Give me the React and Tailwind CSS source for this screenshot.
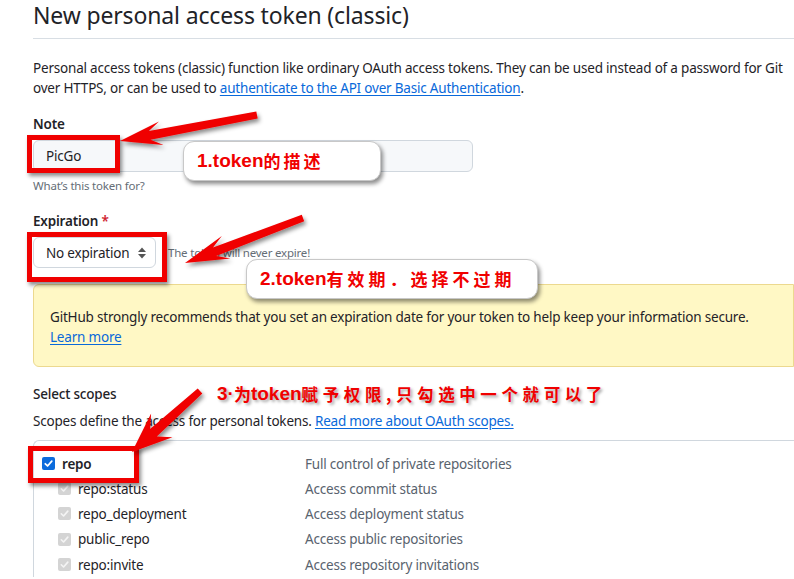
import React from "react";

function arrowPts(x1, y1, x2, y2, tw, sw, hl, hw) {
  const dx = x2 - x1, dy = y2 - y1;
  const L = Math.hypot(dx, dy);
  const ux = dx / L, uy = dy / L;
  const nx = -uy, ny = ux;
  const jx = x2 - ux * hl * 0.72, jy = y2 - uy * hl * 0.72;
  const wx = x2 - ux * hl, wy = y2 - uy * hl;
  const p = [
    [x1 + nx * tw, y1 + ny * tw],
    [jx + nx * sw, jy + ny * sw],
    [wx + nx * hw, wy + ny * hw],
    [x2, y2],
    [wx - nx * hw, wy - ny * hw],
    [jx - nx * sw, jy - ny * sw],
    [x1 - nx * tw, y1 - ny * tw],
  ];
  return p.map((q) => q[0].toFixed(1) + "," + q[1].toFixed(1)).join(" ");
}

function CheckOn() {
  return (
    <span className="inline-flex w-[13px] h-[13px] rounded-[2px] bg-[#0b6bdc] items-center justify-center shrink-0">
      <svg width="11" height="11" viewBox="0 0 12 12">
        <path d="M2.5 6.3 L5 8.7 L9.6 3.4" fill="none" stroke="#fff" strokeWidth="1.9" strokeLinecap="round" strokeLinejoin="round" />
      </svg>
    </span>
  );
}

function CheckOff() {
  return (
    <span className="inline-flex w-[13px] h-[13px] rounded-[2px] bg-[#d4d4d4] items-center justify-center shrink-0">
      <svg width="11" height="11" viewBox="0 0 12 12">
        <path d="M2.5 6.3 L5 8.7 L9.6 3.4" fill="none" stroke="#f4f4f4" strokeWidth="1.8" strokeLinecap="round" strokeLinejoin="round" />
      </svg>
    </span>
  );
}

const subs = [
  ["repo:status", "Access commit status"],
  ["repo_deployment", "Access deployment status"],
  ["public_repo", "Access public repositories"],
  ["repo:invite", "Access repository invitations"],
];

export default function App() {
  return (
    <div className="relative w-[794px] h-[579px] overflow-hidden bg-white text-[#1f2328] font-['Noto_Sans','Noto_Sans_CJK_SC',sans-serif] text-[13.5px] tracking-[-0.2px] leading-[20px]">
      <div className="pl-[33px]">
        <h1 className="text-[23px] tracking-[-0.15px] leading-[30px] font-normal pb-[8px] border-b border-[#d8dee4] whitespace-nowrap">
          New personal access token (classic)
        </h1>
        <div className="mt-[19px] whitespace-nowrap">
          <div>Personal access tokens (classic) function like ordinary OAuth access tokens. They can be used instead of a password for Git</div>
          <div>
            over HTTPS, or can be used to{" "}
            <span className="text-[#0969da] underline underline-offset-2">authenticate to the API over Basic Authentication</span>.
          </div>
        </div>

        <div className="mt-[16px] font-semibold">Note</div>
        <div className="mt-[6px] w-[440px] h-[32px] rounded-[6px] border border-[#d0d7de] bg-[#f6f8fa] flex items-center pl-[12px]">
          PicGo
        </div>
        <div className="mt-[5px] text-[11.5px] leading-[18px] text-[#656d76]">What’s this token for?</div>

        <div className="mt-[16px] font-semibold">
          Expiration <span className="text-[#cf222e]">*</span>
        </div>
        <div className="mt-[6px] flex items-center">
          <div className="w-[123px] h-[31px] rounded-[6px] border border-[#d0d7de] bg-white flex items-center pl-[12px] pr-[8px] justify-between">
            <span>No expiration</span>
            <svg width="10" height="14" viewBox="0 0 10 14">
              <path d="M5 1.5 L9 6 L1 6 Z" fill="#555" />
              <path d="M5 12.5 L9 8 L1 8 Z" fill="#555" />
            </svg>
          </div>
          <span className="ml-[12px] text-[11.5px] text-[#656d76]">The token will never expire!</span>
        </div>

        <div className="mt-[16px] border border-[#ecd98f] bg-[#fff8c5] rounded-l-[6px] pt-[22px] pb-[19px] pl-[16px] whitespace-nowrap">
          <div>GitHub strongly recommends that you set an expiration date for your token to help keep your information secure.</div>
          <div className="text-[#0969da] underline underline-offset-2 inline-block">Learn more</div>
        </div>

        <div className="mt-[17px] font-medium">Select scopes</div>
        <div className="mt-[7px] whitespace-nowrap">
          Scopes define the access for personal tokens.{" "}
          <span className="text-[#0969da] underline underline-offset-2">Read more about OAuth scopes.</span>
        </div>

        <div className="mt-[9px] border-t border-l border-[#d0d7de] rounded-tl-[6px] pt-[10px]">
          <div className="flex items-center h-[25px]">
            <div className="w-[271px] flex items-center pl-[8px] gap-[7px]">
              <CheckOn />
              <span className="font-semibold">repo</span>
            </div>
            <span className="text-[#59636e]">Full control of private repositories</span>
          </div>
          {subs.map(([n, d]) => (
            <div key={n} className="flex items-center h-[25.3px]">
              <div className="w-[271px] flex items-center pl-[24px] gap-[7px]">
                <CheckOff />
                <span>{n}</span>
              </div>
              <span className="text-[#59636e]">{d}</span>
            </div>
          ))}
        </div>
      </div>

      {/* Red highlight boxes */}
      <div className="absolute left-[27px] top-[135px] w-[93px] h-[38px] border-[5px] border-[#f00000] shadow-[2px_3px_4px_rgba(0,0,0,0.45)]" />
      <div className="absolute left-[27px] top-[232px] w-[140px] h-[50px] border-[5px] border-[#f00000] shadow-[2px_3px_4px_rgba(0,0,0,0.45)]" />
      <div className="absolute left-[28px] top-[446px] w-[111px] h-[37px] border-[5px] border-[#f00000] shadow-[2px_3px_4px_rgba(0,0,0,0.45)]" />

      {/* Callouts */}
      <div className="absolute left-[183px] top-[141px] w-[198px] h-[40px] rounded-[11px] border border-[#c8c8c8] bg-white shadow-[2px_3px_4px_rgba(0,0,0,0.45)] flex items-center pl-[13px] text-[#f00000] tracking-normal">
        <span className="font-['Liberation_Sans'] font-bold text-[19px]">1.token</span>
        <span className="font-['Noto_Sans_CJK_SC'] text-[17px] tracking-[3px] font-semibold">的描述</span>
      </div>
      <div className="absolute left-[246px] top-[259px] w-[292px] h-[40px] rounded-[11px] border border-[#c8c8c8] bg-white shadow-[2px_3px_4px_rgba(0,0,0,0.45)] flex items-center pl-[13px] text-[#f00000] tracking-normal">
        <span className="font-['Liberation_Sans'] font-bold text-[19px]">2.token</span>
        <span className="font-['Noto_Sans_CJK_SC'] text-[17px] tracking-[4px] font-semibold">有效期．选择不过期</span>
      </div>
      <div className="absolute left-[217px] top-[384px] text-[#f00000] whitespace-nowrap [text-shadow:2px_2px_3px_rgba(0,0,0,0.35)] flex items-center tracking-normal">
        <span className="font-['Liberation_Sans'] font-bold text-[19px]">3·</span>
        <span className="font-['Noto_Sans_CJK_SC'] font-bold text-[17px]">为</span>
        <span className="font-['Liberation_Sans'] font-bold text-[19px]">token</span>
        <span className="font-['Noto_Sans_CJK_SC'] text-[16.5px] tracking-[4.6px] font-semibold">赋予权限,只勾选中一个就可以了</span>
      </div>

      {/* Arrows */}
      <svg className="absolute left-0 top-0 pointer-events-none" width="794" height="579">
        <defs>
          <filter id="sh" x="-20%" y="-20%" width="140%" height="140%">
            <feDropShadow dx="2" dy="3" stdDeviation="2" floodColor="#000" floodOpacity="0.45" />
          </filter>
        </defs>
        <g fill="#f00000" filter="url(#sh)">
          <polygon points={arrowPts(257, 115, 120, 141, 3.5, 4.5, 42, 12)} />
          <polygon points={arrowPts(303, 218, 185, 263, 3.5, 4.5, 44, 12)} />
          <polygon points={arrowPts(200, 391, 132, 452, 3.5, 5, 40, 16)} />
        </g>
      </svg>
    </div>
  );
}
